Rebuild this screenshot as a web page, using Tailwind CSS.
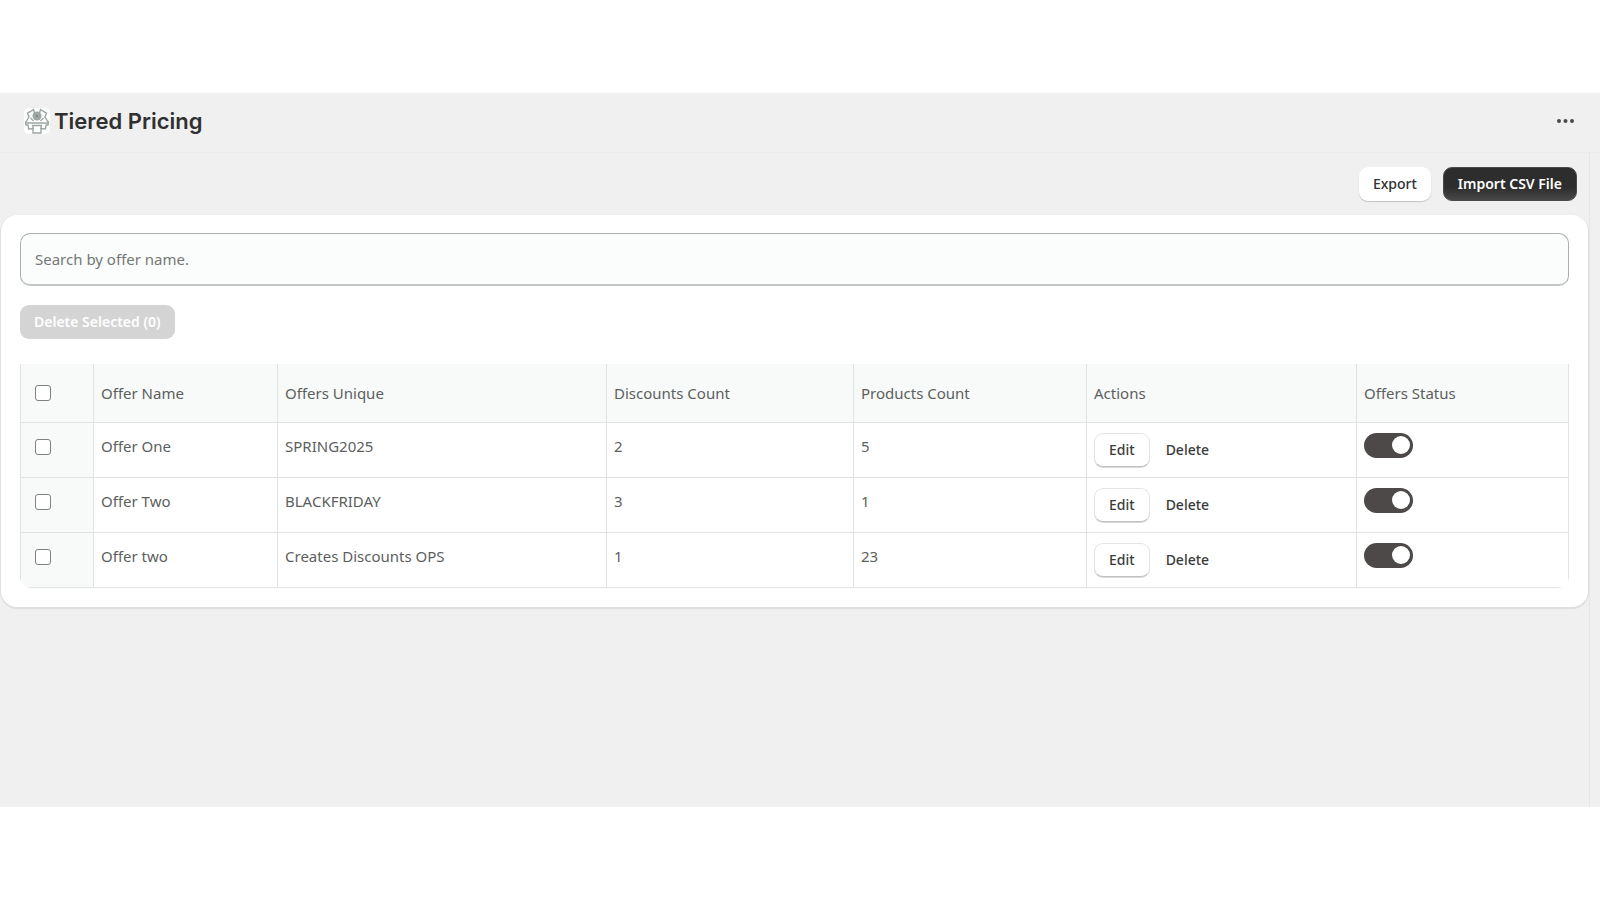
<!DOCTYPE html>
<html lang="en">
<head>
    <meta charset="UTF-8">
    <meta name="viewport" content="width=device-width, initial-scale=1.0">
    <title>Tiered Pricing</title>
    <script src="https://cdn.jsdelivr.net/npm/@tailwindcss/browser@4"></script>
</head>
<body class="bg-white pt-[93px] font-['Noto_Sans',sans-serif] text-[15px] leading-6 text-[#5c5f5e]">
    <div class="bg-[#f0f0f0] flex flex-col min-h-[714px]">
        <header class="flex items-center justify-between h-[60px] px-6 pb-1 border-b border-[#ebebeb]">
            <div class="flex items-center gap-1">
                <svg class="w-[26px] h-[26px]" viewBox="0 0 26 26" fill="none" stroke="#9ca8a3" stroke-width="1.4">
                    <rect width="26" height="26" rx="5" fill="#fff" stroke="none"/>
                    <circle cx="13" cy="8" r="4.500" fill="#9ca8a3" stroke="none"/>
                    <circle cx="13" cy="8" r="0.800" fill="#5c6662" stroke="none"/>
                    <path d="M10.500 5 9.500 1.500 7.500 3 3.500 5 5 9 2.500 13 1.500 14 2 17H4L4.500 21 9 20.500V25H17V20.500L21.500 21 22 17H24L24.500 14 23.500 13 21 9 22.500 5 18.500 3 16.500 1.500 15.500 5"/>
                    <path d="M2 15H24M8 17.500H18M9 17.500V21M17 17.500V21M6.500 10 9.500 13M19.500 10 16.500 13"/>
                </svg>
                <h1 class="font-[Inter,sans-serif] text-[22px] font-semibold text-[#303030]">Tiered Pricing</h1>
            </div>
            <button type="button" aria-label="More actions">
                <svg class="w-5 h-5" viewBox="0 0 20 20" fill="#4a4a4a">
                    <circle cx="3" cy="10" r="2"/>
                    <circle cx="9.500" cy="10" r="2"/>
                    <circle cx="16" cy="10" r="2"/>
                </svg>
            </button>
        </header>

        <main class="flex-1 mr-[10px] border-r border-[#e6e6e6]">
            <div class="flex justify-end gap-3 py-[14px] pr-3 text-[14px]">
                <button type="button" class="h-[34px] px-[14px] rounded-[9px] bg-white font-medium text-[#303030] shadow-[0_1px_1px_#c4c4c4]">Export</button>
                <button type="button" class="h-[34px] px-[14px] rounded-[9px] border border-[#4a4a4a] bg-linear-to-b from-[#2d2d2d] from-60% to-[#484848] font-semibold text-white">Import CSV File</button>
            </div>

            <section class="mx-px px-[19px] pt-[18px] pb-[19px] bg-white rounded-2xl shadow-[0_1px_1px_1px_#dcdfde]">
                <input type="search" aria-label="Search by offer name" placeholder="Search by offer name."
                       class="block w-full h-[53px] px-[14px] rounded-[10px] border border-[#a9b0ad] border-b-2 border-b-[#c2c5c4] bg-[#fbfdfc] placeholder:text-[#747876]">

                <button type="button" disabled class="mt-[19px] h-[34px] px-[14px] rounded-[9px] bg-[#d4d4d4] text-[14px] font-semibold text-white">Delete Selected (0)</button>

                <div class="mt-[25px] overflow-hidden rounded-b-xl">
                    <table class="w-full table-fixed border-collapse text-left">
                        <colgroup>
                            <col class="w-[73px]">
                            <col class="w-[184px]">
                            <col class="w-[329px]">
                            <col class="w-[247px]">
                            <col class="w-[233px]">
                            <col class="w-[270px]">
                            <col>
                        </colgroup>
                        <thead>
                            <tr class="h-[58px] bg-[#f8faf9]">
                                <th class="border-x border-b border-[#e0e3e2] pl-[14px]"><input type="checkbox" aria-label="Select all offers" class="block w-4 h-4 appearance-none rounded-[3px] border border-[#7c8380] bg-white"></th>
                                <th class="border-x border-b border-[#e0e3e2] px-[7px] font-normal">Offer Name</th>
                                <th class="border-x border-b border-[#e0e3e2] px-[7px] font-normal">Offers Unique</th>
                                <th class="border-x border-b border-[#e0e3e2] px-[7px] font-normal">Discounts Count</th>
                                <th class="border-x border-b border-[#e0e3e2] px-[7px] font-normal">Products Count</th>
                                <th class="border-x border-b border-[#e0e3e2] px-[7px] font-normal">Actions</th>
                                <th class="border-x border-b border-[#e0e3e2] px-[7px] font-normal">Offers Status</th>
                            </tr>
                        </thead>
                        <tbody id="offers"></tbody>
                    </table>
                </div>
            </section>
        </main>
    </div>

    <script>
        const offers = [
            { name: 'Offer One', unique: 'SPRING2025', discounts: 2, products: 5 },
            { name: 'Offer Two', unique: 'BLACKFRIDAY', discounts: 3, products: 1 },
            { name: 'Offer two', unique: 'Creates Discounts OPS', discounts: 1, products: 23 },
        ];

        // Render one table row per offer
        document.getElementById('offers').innerHTML = offers.map((offer) => `
            <tr class="align-top">
                <td class="border border-[#e0e3e2] bg-[#f8faf9] pl-[14px] pt-4"><input type="checkbox" aria-label="Select ${offer.name}" class="block w-4 h-4 appearance-none rounded-[3px] border border-[#7c8380] bg-white"></td>
                <td class="border border-[#e0e3e2] px-[7px] pt-[11px]">${offer.name}</td>
                <td class="border border-[#e0e3e2] px-[7px] pt-[11px]">${offer.unique}</td>
                <td class="border border-[#e0e3e2] px-[7px] pt-[11px]">${offer.discounts}</td>
                <td class="border border-[#e0e3e2] px-[7px] pt-[11px]">${offer.products}</td>
                <td class="border border-[#e0e3e2] px-[7px] py-[10px]">
                    <div class="flex gap-[2px] text-[14px] font-medium text-[#3a3c3b]">
                        <button type="button" class="h-[34px] px-[14px] rounded-[9px] border border-[#e3e5e4] border-b-[#bfc2c1] bg-white shadow-[0_1px_0_#d8dad9]">Edit</button>
                        <button type="button" class="h-[34px] px-[14px]">Delete</button>
                    </div>
                </td>
                <td class="border border-[#e0e3e2] px-[7px] pt-[10px]">
                    <label class="flex w-[49px] h-[25px] items-center justify-end rounded-full bg-[#4d4948] pr-[3px]">
                        <input type="checkbox" checked aria-label="${offer.name} status" class="w-[18px] h-[18px] appearance-none rounded-full bg-white">
                    </label>
                </td>
            </tr>`).join('');
    </script>
</body>
</html>
